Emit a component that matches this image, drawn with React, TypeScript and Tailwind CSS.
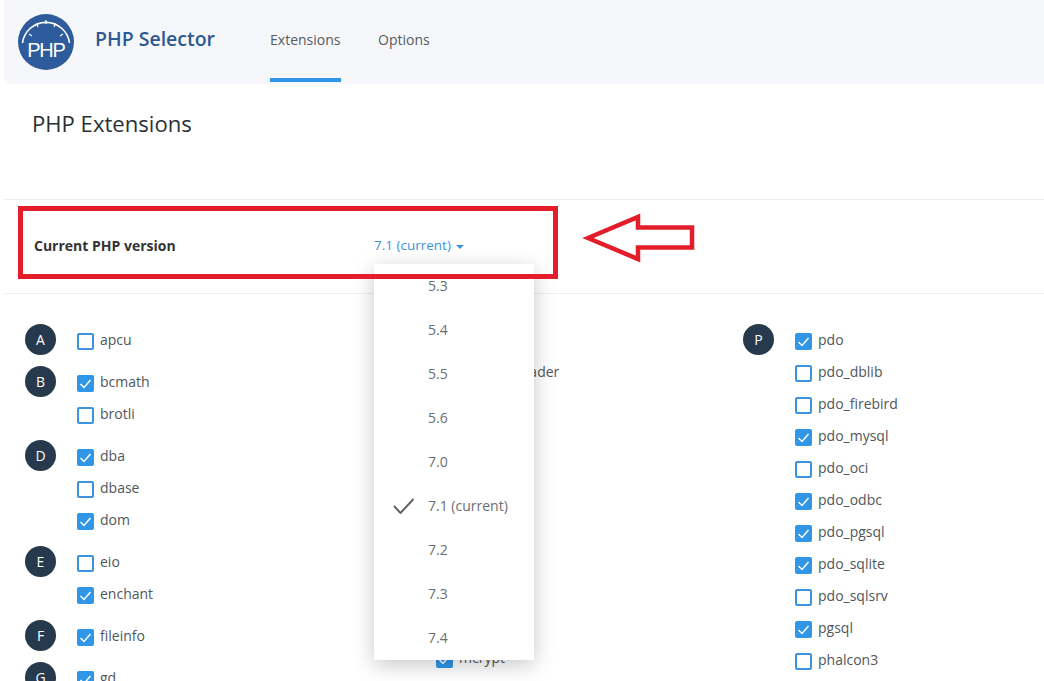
const columns = [
  [
    { letter: "A", items: [["apcu", false]] },
    { letter: "B", items: [["bcmath", true], ["brotli", false]] },
    { letter: "D", items: [["dba", true], ["dbase", false], ["dom", true]] },
    { letter: "E", items: [["eio", false], ["enchant", true]] },
    { letter: "F", items: [["fileinfo", true]] },
    { letter: "G", items: [["gd", true]] },
  ],
  [
    { letter: "I", items: [["imagick", true], ["ioncube_loader", false], ["imap", true], ["intl", true]] },
    { letter: "J", items: [["json", true]] },
    { letter: "L", items: [["ldap", false], ["lzf", false]] },
    { letter: "M", items: [["mailparse", false], ["mbstring", true], ["mcrypt", true]] },
  ],
  [
    {
      letter: "P",
      items: [
        ["pdo", true],
        ["pdo_dblib", false],
        ["pdo_firebird", false],
        ["pdo_mysql", true],
        ["pdo_oci", false],
        ["pdo_odbc", true],
        ["pdo_pgsql", true],
        ["pdo_sqlite", true],
        ["pdo_sqlsrv", false],
        ["pgsql", true],
        ["phalcon3", false],
      ],
    },
  ],
] as { letter: string; items: [string, boolean][] }[][];

const versions = ["5.3", "5.4", "5.5", "5.6", "7.0", "7.1 (current)", "7.2", "7.3", "7.4"];

const Logo = () => (
  <svg width="56" height="56" viewBox="0 0 56 56" className="shrink-0">
    <circle cx="28" cy="28" r="28" fill="#2d5b9b" />
    <path d="M4.5 29 A23.7 23.7 0 0 1 51.5 29" fill="none" stroke="#ffffff" strokeWidth="1.6" />
    <path
      d="M11 20 L14 22 M18.5 9.5 L20 13 M28 6 L28 10 M37.5 9.5 L36 13 M45 20 L42 22"
      stroke="#ffffff"
      strokeWidth="1.2"
    />
    <text x="28" y="43" textAnchor="middle" fill="#ffffff" fontSize="20" letterSpacing="-1.2" fontFamily="'Liberation Sans', sans-serif">
      PHP
    </text>
  </svg>
);

const Checkbox = ({ checked }: { checked: boolean }) =>
  checked ? (
    <span className="w-[17px] h-[17px] rounded-[2px] bg-[#2f96e8] flex items-center justify-center shrink-0 mt-[9px]">
      <svg width="13" height="13" viewBox="0 0 13 13" fill="none">
        <path d="M1.5 7 L5 10.5 L11.5 3" stroke="#ffffff" strokeWidth="1.5" />
      </svg>
    </span>
  ) : (
    <span className="w-[17px] h-[17px] rounded-[2px] border-2 border-[#3d94dc] bg-white shrink-0 mt-[9px]" />
  );

const App = () => {
  return (
    <div className="relative w-[1044px] h-[681px] overflow-hidden bg-white pl-1 font-['Open_Sans',sans-serif]">
      <header className="h-[84px] bg-[#f5f7fa] rounded-bl-md flex pl-[14px]">
        <div className="flex items-center h-[84px]">
          <Logo />
          <h1 className="ml-[21px] -mt-[6px] text-[19.5px] font-semibold text-[#2d5a92]">PHP Selector</h1>
        </div>
        <nav className="flex ml-[55px] gap-[37px] text-sm text-[#555b60]">
          <div className="w-[71px] h-[82px] pt-[30px] border-b-4 border-[#2f96e8]">Extensions</div>
          <div className="pt-[30px]">Options</div>
        </nav>
      </header>

      <section className="h-[116px] pl-7 pt-[24px] border-b border-[#eceef0]">
        <h2 className="text-[22.1px] leading-[30px] text-[#2b2f33]">PHP Extensions</h2>
      </section>

      <section className="h-[94px] pl-[30px] pb-[2px] flex items-center border-b border-[#eceef0]">
        <span className="w-[340px] text-sm font-bold text-[#333]">Current PHP version</span>
        <span className="flex items-center gap-[5px] text-[13.5px] text-[#3d94dc]">
          7.1 (current)
          <span className="w-0 h-0 border-x-4 border-t-4 border-x-transparent border-t-[#3d94dc] mt-[2px]" />
        </span>
      </section>

      <section className="grid grid-cols-[359px_359px_1fr] pl-[21px] pt-[30px]">
        {columns.map((groups, i) => (
          <div key={i} className="flex flex-col gap-[10px]">
            {groups.map((group) => (
              <div key={group.letter} className="flex">
                <div className="w-[31px] h-[31px] rounded-full bg-[#26394d] text-white text-sm font-medium flex items-center justify-center shrink-0">
                  {group.letter}
                </div>
                <ul className="ml-[21px]">
                  {group.items.map(([name, checked]) => (
                    <li key={name} className="h-[32px] flex gap-[6px] text-sm leading-[31px] text-[#50565c]">
                      <Checkbox checked={checked} />
                      <span>{name}</span>
                    </li>
                  ))}
                </ul>
              </div>
            ))}
          </div>
        ))}
      </section>

      <div className="absolute left-[374px] top-[264px] w-[160px] bg-white shadow-[0_5px_20px_rgba(0,0,0,0.22)]">
        {versions.map((version) => (
          <div key={version} className="relative h-[44px] pl-[54px] flex items-center text-sm text-[#6b6e72]">
            {version.includes("current") && (
              <svg width="22" height="16" viewBox="0 0 22 16" fill="none" className="absolute left-[19px] top-[14px]">
                <path d="M1 8 L7.5 15 L20.5 1" stroke="#5f6266" strokeWidth="2" />
              </svg>
            )}
            {version}
          </div>
        ))}
      </div>

      <div className="absolute left-[18px] top-[206px] w-[540px] h-[73px] border-[5px] border-[#e31e2a]" />

      <svg width="130" height="60" viewBox="0 0 130 60" fill="none" className="absolute left-[575px] top-[208px]">
        <path
          d="M13 30 L63 9 L63 19.5 L117 19.5 L117 39.5 L63 39.5 L63 51 Z"
          stroke="#e31e2a"
          strokeWidth="4.5"
          strokeLinejoin="miter"
        />
      </svg>
    </div>
  );
};

export default App;
